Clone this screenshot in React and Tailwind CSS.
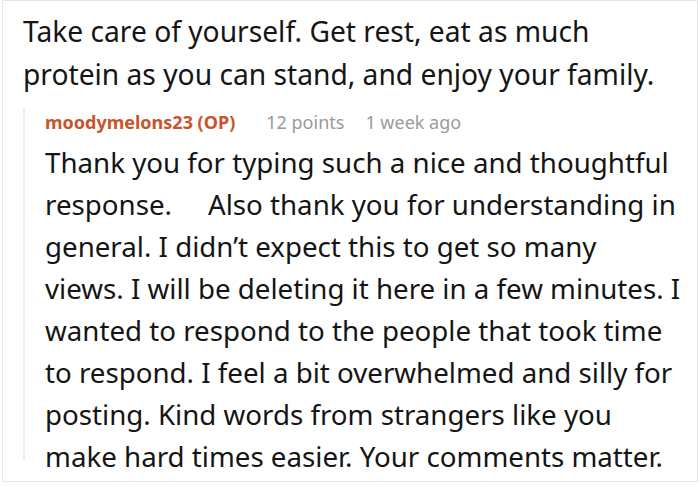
import React from 'react';

const reply = [
  'Thank you for typing such a nice and thoughtful',
  'response.\u00a0\u00a0\u00a0\u00a0 Also thank you for understanding in',
  'general. I didn\u2019t expect this to get so many',
  'views. I will be deleting it here in a few minutes. I',
  'wanted to respond to the people that took time',
  'to respond. I feel a bit overwhelmed and silly for',
  'posting. Kind words from strangers like you',
  'make hard times easier. Your comments matter.',
];

const App = () => {
  return (
    <div className="w-[700px] h-[487px] bg-white font-['Noto_Sans',sans-serif]">
      <div className="ml-[2px] w-[696px] h-[482px] border border-[#e6e6e6] pl-[20px] pt-[9px]">
        <p className="text-[28.2px] leading-[43px] text-[#151515] whitespace-nowrap">
          Take care of yourself. Get rest, eat as much
          <br />
          protein as you can stand, and enjoy your family.
        </p>
        <div className="mt-[20px] border-l-2 border-[#ececec] pl-[20px] h-[350px]">
          <div className="flex items-center text-[18px] leading-[26px] mt-[-7px]">
            <span className="font-bold text-[#c9542c]">moodymelons23 (OP)</span>
            <span className="ml-[31px] text-[#9a9a9a]">12 points</span>
            <span className="ml-[21px] text-[#9a9a9a]">1 week ago</span>
          </div>
          <p className="text-[27.7px] leading-[42px] text-[#151515] whitespace-nowrap mt-[6px]">
            {reply.map((line, i) => (
              <span key={i} className="block">
                {line}
              </span>
            ))}
          </p>
        </div>
      </div>
    </div>
  );
};

export default App;
